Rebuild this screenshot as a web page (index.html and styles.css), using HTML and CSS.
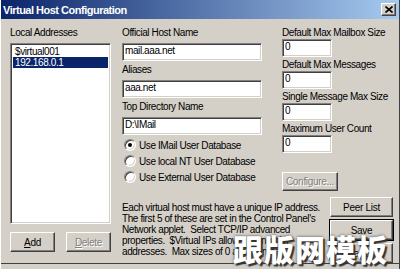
FILE: index.html
```html
<!DOCTYPE html>
<html lang="en">
<head>
    <meta charset="UTF-8">
    <title>Virtual Host Configuration</title>
    <link rel="stylesheet" href="styles.css">
</head>
<body>
    <div class="window">
        <div class="titlebar">
            <span class="title">Virtual Host Configuration</span>
            <span class="close">
                <svg width="8" height="7" viewBox="0 0 8 7"><path d="M0.5 0.5 L7.5 6.5 M7.5 0.5 L0.5 6.5" stroke="#000" stroke-width="1.6"/></svg>
            </span>
        </div>

        <div class="client">
            <div class="col-left">
                <div class="label">Local Addresses</div>
                <div class="listbox">
                    <div class="item">$virtual001</div>
                    <div class="item selected">192.168.0.1</div>
                </div>
                <div class="left-buttons">
                    <div class="btn"><u>A</u>dd</div>
                    <div class="btn disabled"><u>D</u>elete</div>
                </div>
            </div>

            <div class="col-main">
                <div class="main-top">
                    <div class="col-mid">
                        <div class="field">
                            <div class="label">Official Host Name</div>
                            <div class="input">mail.aaa.net</div>
                        </div>
                        <div class="field">
                            <div class="label">Aliases</div>
                            <div class="input">aaa.net</div>
                        </div>
                        <div class="field">
                            <div class="label">Top Directory Name</div>
                            <div class="input">D:\IMail</div>
                        </div>
                        <div class="radios">
                            <div class="radio-row"><span class="radio checked"></span>Use IMail User Database</div>
                            <div class="radio-row"><span class="radio"></span>Use local NT User Database</div>
                            <div class="radio-row"><span class="radio"></span>Use External User Database</div>
                        </div>
                    </div>

                    <div class="col-right">
                        <div class="field small">
                            <div class="label">Default Max Mailbox Size</div>
                            <div class="input">0</div>
                        </div>
                        <div class="field small">
                            <div class="label">Default Max Messages</div>
                            <div class="input">0</div>
                        </div>
                        <div class="field small">
                            <div class="label">Single Message Max Size</div>
                            <div class="input">0</div>
                        </div>
                        <div class="field small">
                            <div class="label">Maximum User Count</div>
                            <div class="input">0</div>
                        </div>
                        <div class="btn disabled configure">Configure...</div>
                    </div>
                </div>

                <div class="main-bottom">
                    <p class="note">Each virtual host must have a unique IP address.<br>The first 5 of these are set in the Control Panel's<br>Network applet.&nbsp; Select TCP/IP advanced<br>properties.&nbsp; $Virtual IPs allow sharing of IP<br>addresses.&nbsp; Max sizes of 0 are unlimited.</p>
                    <div class="right-buttons">
                        <div class="btn">Peer List</div>
                        <div class="btn default">Save</div>
                        <div class="btn">Cancel</div>
                    </div>
                </div>
            </div>
        </div>

        <div class="frame-bottom"></div>

        <div class="watermark">跟版网模板</div>
    </div>
</body>
</html>
```

FILE: styles.css
```css
body {
    margin: 0;
    padding: 0;
    background-color: #d4d0c8;
    font-family: 'Liberation Sans', Arial, sans-serif;
    font-size: 10px;
    color: #000;
}
.window {
    position: relative;
    width: 400px;
    height: 269px;
    display: flex;
    flex-direction: column;
    background-color: #d4d0c8;
    box-sizing: border-box;
    border-left: 1px solid #fff;
    border-right: 1px solid #404040;
    overflow: hidden;
}
.titlebar {
    height: 19px;
    display: flex;
    align-items: center;
    justify-content: space-between;
    padding: 0 3px 0 2px;
    background: linear-gradient(to right, #0a246a, #a6caf0);
}
.title {
    color: #fff;
    font-weight: bold;
    font-size: 11px;
    letter-spacing: -0.5px;
}
.close {
    width: 15px;
    height: 13px;
    box-sizing: border-box;
    display: flex;
    align-items: center;
    justify-content: center;
    background-color: #d4d0c8;
    border: 1px solid;
    border-color: #fff #404040 #404040 #fff;
    box-shadow: inset -1px -1px #808080;
}
.client {
    flex: 1;
    display: flex;
    padding: 7px 0 0 9px;
}
.label {
    height: 13px;
    line-height: 13px;
    letter-spacing: -0.4px;
    white-space: nowrap;
}

/* left column */
.col-left {
    width: 101px;
    display: flex;
    flex-direction: column;
}
.listbox {
    margin-top: 4px;
    height: 181px;
    box-sizing: border-box;
    background-color: #fff;
    border: 1px solid;
    border-color: #808080 #fff #fff #808080;
    box-shadow: inset 1px 1px #404040, inset -1px -1px #d4d0c8;
    padding: 2px 2px;
}
.item {
    height: 11px;
    line-height: 11px;
    padding-left: 2px;
    letter-spacing: -0.4px;
}
.item.selected {
    background-color: #0a246a;
    color: #fff;
}
.left-buttons {
    margin-top: 8px;
    display: flex;
    justify-content: space-between;
}
.left-buttons .btn {
    width: 45px;
}

/* buttons */
.btn {
    height: 20px;
    box-sizing: border-box;
    display: flex;
    align-items: center;
    justify-content: center;
    background-color: #d4d0c8;
    border: 1px solid;
    border-color: #fff #404040 #404040 #fff;
    box-shadow: inset -1px -1px #808080;
    letter-spacing: -0.3px;
    white-space: nowrap;
}
.btn.disabled {
    color: #808080;
    text-shadow: 1px 1px 0 #fff;
}
.btn.default {
    outline: 1px solid #000;
}

/* main area */
.col-main {
    margin-left: 11px;
    display: flex;
    flex-direction: column;
}
.main-top {
    display: grid;
    grid-template-columns: 140px 111px;
    column-gap: 20px;
}
.field {
    margin-bottom: 2px;
}
.field .input {
    margin-top: 4px;
}
.field.small {
    margin-bottom: 1px;
}
.field.small .input {
    margin-top: 0;
    width: 50px;
}
.input {
    height: 18px;
    box-sizing: border-box;
    line-height: 14px;
    padding-left: 2px;
    background-color: #fff;
    border: 1px solid;
    border-color: #808080 #fff #fff #808080;
    box-shadow: inset 1px 1px #404040, inset -1px -1px #d4d0c8;
    letter-spacing: -0.4px;
    white-space: nowrap;
}
.radios {
    margin-top: 2px;
}
.radio-row {
    height: 16px;
    display: flex;
    align-items: center;
    padding-left: 2px;
    letter-spacing: -0.4px;
    white-space: nowrap;
}
.radio {
    position: relative;
    width: 12px;
    height: 12px;
    box-sizing: border-box;
    margin-right: 3px;
    border-radius: 50%;
    background-color: #fff;
    border: 1px solid;
    border-color: #808080 #fff #fff #808080;
    box-shadow: inset 1px 1px #404040, inset -1px -1px #d4d0c8;
}
.radio.checked::after {
    content: "";
    position: absolute;
    left: 3px;
    top: 3px;
    width: 4px;
    height: 4px;
    border-radius: 50%;
    background-color: #000;
}
.configure {
    margin-top: 19px;
    width: 56px;
    height: 19px;
}
.main-bottom {
    margin-top: 6px;
    display: flex;
}
.note {
    width: 208px;
    margin: 0;
    padding-top: 5px;
    line-height: 11px;
    letter-spacing: -0.4px;
    white-space: nowrap;
    overflow: hidden;
}
.right-buttons {
    width: 63px;
    display: flex;
    flex-direction: column;
    gap: 2px;
}
.right-buttons .default {
    margin: 1px 0;
}
.frame-bottom {
    height: 5px;
    border-top: 1px solid #404040;
}

/* watermark laid over the dialog */
.watermark {
    position: absolute;
    left: 232px;
    top: 226px;
    font-family: 'Noto Sans CJK SC', sans-serif;
    font-weight: 900;
    font-size: 30px;
    letter-spacing: 1px;
    color: #fff;
    text-shadow: 2px 2px 1px #333, 0 0 3px #444;
}
```
